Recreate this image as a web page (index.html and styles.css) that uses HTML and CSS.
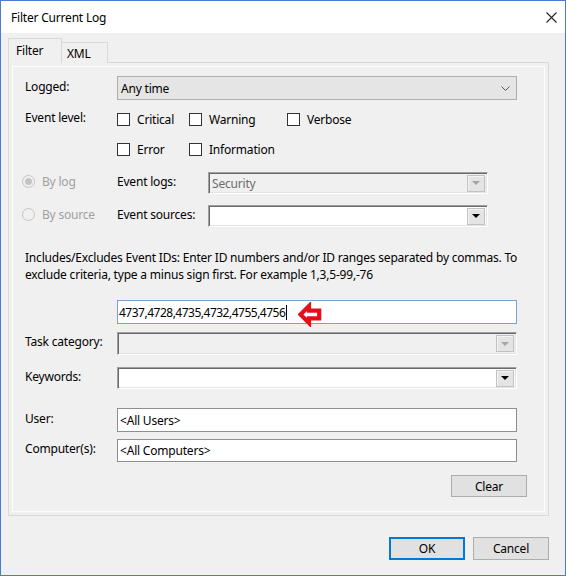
FILE: index.html
```html
<!DOCTYPE html>
<html>
<head>
<meta charset="utf-8">
<link rel="stylesheet" href="styles.css">
</head>
<body>
<div class="window">
  <div class="titlebar">
    <span class="title">Filter Current Log</span>
    <svg class="close" width="11" height="11" viewBox="0 0 11 11"><path d="M0.5 0.5 L10.5 10.5 M10.5 0.5 L0.5 10.5" stroke="#222" stroke-width="1.1" fill="none"/></svg>
  </div>
  <div class="content">
    <div class="tabs">
      <div class="tab active">Filter</div>
      <div class="tab">XML</div>
    </div>
    <div class="page">
      <div class="page-inner">
        <div class="row r-logged">
          <div class="lbl">Logged:</div>
          <div class="select w400">
            <span>Any time</span>
            <svg class="chev" width="9" height="5" viewBox="0 0 9 5"><path d="M0.5 0.5 L4.5 4.5 L8.5 0.5" stroke="#555" stroke-width="1" fill="none"/></svg>
          </div>
        </div>
        <div class="row r-level1">
          <div class="lbl">Event level:</div>
          <div class="cb w72"><span class="box"></span>Critical</div>
          <div class="cb w98"><span class="box"></span>Warning</div>
          <div class="cb"><span class="box"></span>Verbose</div>
        </div>
        <div class="row r-level2">
          <div class="lbl"></div>
          <div class="cb w72"><span class="box"></span>Error</div>
          <div class="cb"><span class="box"></span>Information</div>
        </div>
        <div class="row r-bylog">
          <div class="radio-col"><span class="radio checked"></span>By log</div>
          <div class="lbl2">Event logs:</div>
          <div class="combo disabled w280"><span class="ctext">Security</span><span class="dd"><i></i></span></div>
        </div>
        <div class="row r-bysource">
          <div class="radio-col"><span class="radio"></span>By source</div>
          <div class="lbl2">Event sources:</div>
          <div class="combo w280"><span class="ctext"></span><span class="dd"><i></i></span></div>
        </div>
        <p class="desc">Includes/Excludes Event IDs: Enter ID numbers and/or ID ranges separated by commas. To<br>exclude criteria, type a minus sign first. For example 1,3,5-99,-76</p>
        <div class="row r-ids">
          <div class="lbl"></div>
          <div class="textbox focus w400">
            <span class="ids">4737,4728,4735,4732,4755,4756</span><span class="caret"></span>
            <svg class="arrow" width="24" height="25" viewBox="0 0 24 25"><path d="M2.5 12.5 L11 4 L11 8.6 L21.2 8.6 L21.2 16.4 L11 16.4 L11 21 Z" fill="#fff" stroke="#e3101c" stroke-width="4.2" stroke-linejoin="miter"/></svg>
          </div>
        </div>
        <div class="row r-task">
          <div class="lbl">Task category:</div>
          <div class="combo disabled w400"><span class="ctext"></span><span class="dd"><i></i></span></div>
        </div>
        <div class="row r-keywords">
          <div class="lbl">Keywords:</div>
          <div class="combo w400"><span class="ctext"></span><span class="dd"><i></i></span></div>
        </div>
        <div class="row r-user">
          <div class="lbl">User:</div>
          <div class="textbox w400"><span>&lt;All Users&gt;</span></div>
        </div>
        <div class="row r-computer">
          <div class="lbl">Computer(s):</div>
          <div class="textbox w400"><span>&lt;All Computers&gt;</span></div>
        </div>
        <div class="clear-row">
          <div class="btn">Clear</div>
        </div>
      </div>
    </div>
    <div class="footer">
      <div class="btn ok">OK</div>
      <div class="btn">Cancel</div>
    </div>
  </div>
</div>
</body>
</html>
```

FILE: styles.css
```css
html, body {
  margin: 0;
  padding: 0;
  background: #f0f0f0;
}
.window {
  width: 566px;
  height: 576px;
  box-sizing: border-box;
  border: 1px solid #4a7bd0;
  background: #f0f0f0;
  display: flex;
  flex-direction: column;
  font-family: "Noto Sans", "Open Sans", sans-serif;
  font-size: 12px;
  letter-spacing: -0.2px;
  color: #000;
}
.titlebar {
  height: 32px;
  flex: none;
  background: #fff;
  display: flex;
  align-items: center;
  justify-content: space-between;
  padding: 0 8px 0 10px;
}
.title {
  font-size: 12px;
}
.close {
  display: block;
}
.content {
  flex: 1;
  padding: 6px 16px 0 7px;
  display: flex;
  flex-direction: column;
}
.tabs {
  display: flex;
  align-items: flex-end;
  height: 24px;
  margin-bottom: -1px;
  position: relative;
  z-index: 1;
}
.tab {
  box-sizing: border-box;
  height: 21px;
  width: 46px;
  border: 1px solid #d9d9d9;
  border-left: none;
  border-bottom: none;
  background: #f0f0f0;
  padding-left: 5px;
  display: flex;
  align-items: center;
}
.tab.active {
  height: 25px;
  width: 54px;
  border-left: 1px solid #d9d9d9;
  padding-left: 7px;
  padding-bottom: 2px;
}
.page {
  box-sizing: border-box;
  height: 454px;
  border: 1px solid #d9d9d9;
  padding: 3px;
}
.page-inner {
  box-sizing: border-box;
  height: 100%;
  border: 1px solid #fdfdfd;
  padding-left: 9px;
  display: flex;
  flex-direction: column;
}
.row {
  display: flex;
  align-items: center;
  flex: none;
}
.lbl {
  width: 92px;
  padding-left: 3px;
  flex: none;
  margin-bottom: 4px;
}
.lbl2 {
  width: 91px;
  flex: none;
  margin-bottom: 4px;
}
.r-logged { margin-top: 9px; height: 24px; }
.r-level1 { margin-top: 13px; height: 13px; }
.r-level1 .lbl { margin-bottom: 5px; }
.r-level2 { margin-top: 17px; height: 13px; }
.r-bylog { margin-top: 16px; height: 22px; }
.r-bysource { margin-top: 11px; height: 22px; }
.desc {
  margin: 22px 0 0 0;
  padding-left: 3px;
  line-height: 17px;
}
.r-ids { margin-top: 17px; height: 24px; }
.r-task { margin-top: 8px; height: 23px; }
.r-keywords { margin-top: 12px; height: 22px; }
.r-user { margin-top: 19px; height: 24px; }
.r-computer { margin-top: 7px; height: 23px; }

.w400 { width: 400px; }
.w280 { width: 280px; }
.w72 { width: 72px; }
.w98 { width: 98px; }

.select {
  box-sizing: border-box;
  height: 100%;
  background: #e5e5e5;
  border: 1px solid #adadad;
  display: flex;
  align-items: center;
  justify-content: space-between;
  padding: 0 6px 0 3px;
}
.chev { display: block; }

.cb {
  display: flex;
  align-items: center;
  flex: none;
}
.box {
  box-sizing: border-box;
  width: 13px;
  height: 13px;
  border: 1px solid #333;
  background: #fff;
  margin-right: 7px;
  flex: none;
}

.radio-col {
  width: 95px;
  flex: none;
  display: flex;
  align-items: center;
  color: #a0a0a0;
  margin-bottom: 3px;
}
.radio {
  box-sizing: border-box;
  width: 13px;
  height: 13px;
  border: 1px solid #c4c4c4;
  border-radius: 50%;
  background: #f0f0f0;
  margin-right: 7px;
  flex: none;
  display: flex;
  align-items: center;
  justify-content: center;
}
.radio.checked::after {
  content: "";
  width: 7px;
  height: 7px;
  border-radius: 50%;
  background: #c4c4c4;
}

.combo {
  box-sizing: border-box;
  height: 100%;
  background: #fff;
  border-top: 1px solid #a0a0a0;
  border-left: 1px solid #a0a0a0;
  border-right: 1px solid #fff;
  border-bottom: 1px solid #fff;
  box-shadow: inset 1px 1px 0 #696969, inset -1px -1px 0 #e3e3e3;
  display: flex;
  align-items: center;
  padding: 0 2px 0 3px;
}
.combo.disabled {
  background: #f0f0f0;
  color: #6d6d6d;
}
.ctext {
  flex: 1;
}
.dd {
  box-sizing: border-box;
  width: 18px;
  height: 17px;
  border: 1px solid #c2c2c2;
  background: #e4e4e4;
  box-shadow: inset 1px 1px 0 #f4f4f4;
  display: flex;
  align-items: center;
  justify-content: center;
  flex: none;
}
.dd i {
  width: 0;
  height: 0;
  border-left: 4px solid transparent;
  border-right: 4px solid transparent;
  border-top: 4px solid #000;
}
.combo.disabled .dd i {
  border-top-color: #a6a6a6;
}

.textbox {
  box-sizing: border-box;
  height: 100%;
  background: #fff;
  border: 1px solid #8f8f8f;
  display: flex;
  align-items: center;
  padding-left: 2px;
  position: relative;
}
.textbox.focus {
  border-color: #7da2ce;
  padding-left: 1px;
}
.ids {
  letter-spacing: -0.5px;
}
.caret {
  width: 1px;
  height: 15px;
  background: #000;
  margin-left: 1px;
}
.arrow {
  position: absolute;
  left: 180px;
  top: 1px;
}

.clear-row {
  display: flex;
  justify-content: flex-end;
  margin-top: 13px;
  padding-right: 17px;
}
.btn {
  box-sizing: border-box;
  width: 76px;
  height: 22px;
  background: #e1e1e1;
  border: 1px solid #adadad;
  display: flex;
  align-items: center;
  justify-content: center;
}
.footer {
  display: flex;
  justify-content: flex-end;
  gap: 8px;
  margin-top: 21px;
}
.footer .btn {
  height: 23px;
}
.btn.ok {
  border: 2px solid #0078d7;
}
```
